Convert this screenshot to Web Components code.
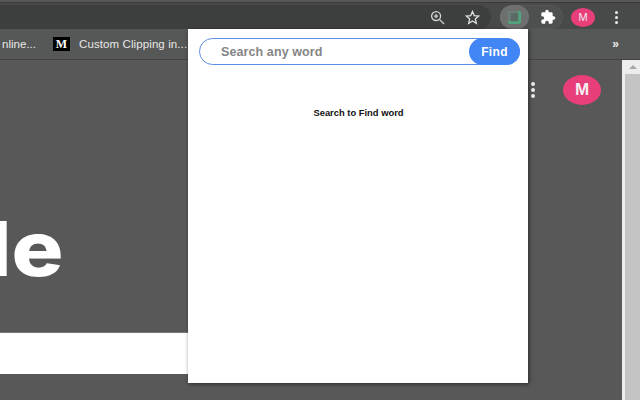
<!DOCTYPE html>
<html>
<head>
<meta charset="utf-8">
<style>
html, body { margin: 0; height: 100%; }
body { width: 640px; height: 400px; overflow: hidden; position: relative; background: #575857; font-family: "Liberation Sans", Arial, sans-serif; display: flex; flex-direction: column; }
</style>
</head>
<body>
<browser-toolbar></browser-toolbar>
<bookmark-bar></bookmark-bar>
<page-view></page-view>
<find-popup></find-popup>

<script>
class BrowserToolbar extends HTMLElement {
    constructor() {
        super();
        this.attachShadow({ mode: 'open' });
        this.shadowRoot.innerHTML = `
            <style>
                :host { display: flex; flex: none; height: 27px; margin-top: 2px; padding-top: 2px; box-sizing: border-box; background: #484949; border-top: 1px solid #3a3a3a; align-items: center; }
                .omni { width: 491px; height: 24px; flex: none; background: #3d3e3e; border-radius: 0 12px 12px 0; display: flex; align-items: center; justify-content: flex-end; gap: 20px; padding-right: 11px; box-sizing: border-box; }
                .ext { margin-left: 9px; width: 63px; height: 24px; border-radius: 12px; background: #4e4f4f; box-shadow: inset 0 0 0 1px #555656; display: flex; align-items: center; }
                .active { width: 29px; height: 24px; border-radius: 12px; background: #6e706f; display: flex; align-items: center; justify-content: center; }
                .puzzle { margin-left: 11px; display: flex; }
                .avatar { margin-left: 8px; width: 24px; height: 19px; border-radius: 50%; background: #e83e7a; color: #f4e8ee; font-size: 11px; display: flex; align-items: center; justify-content: center; }
                .dots { margin-left: 20px; display: flex; flex-direction: column; gap: 2px; }
                .dots i { width: 3px; height: 3px; border-radius: 50%; background: #eee; display: block; }
                svg { display: block; }
            </style>
            <div class="omni">
                <svg width="15" height="15" viewBox="0 0 16 16" fill="none" stroke="#d0d2d2" stroke-width="1.4"><circle cx="6.5" cy="6.5" r="4.8"/><path d="M10 10l5 5M4.3 6.5h4.4M6.5 4.3v4.4"/></svg>
                <svg width="15" height="15" viewBox="0 0 16 16" fill="none" stroke="#dcdede" stroke-width="1.4"><path d="M8 1.6l1.9 4.4 4.7.4-3.6 3.1 1.1 4.7L8 11.7l-4.1 2.5L5 9.5 1.4 6.4l4.7-.4z"/></svg>
            </div>
            <div class="ext">
                <div class="active">
                    <svg width="15" height="15" viewBox="0 0 16 16"><rect x="1" y="1" width="14" height="14" rx="2.5" fill="#4fa67e"/><rect x="1" y="1" width="11" height="11" rx="2" fill="#6b7f78"/><rect x="4" y="3" width="8" height="9" fill="#5a6a64"/></svg>
                </div>
                <div class="puzzle">
                    <svg width="16" height="16" viewBox="0 0 24 24" fill="#fff"><path d="M20.5 11H19V7a2 2 0 0 0-2-2h-4V3.5a2.5 2.5 0 0 0-5 0V5H4a2 2 0 0 0-2 2v3.8h1.5a2.7 2.7 0 0 1 0 5.4H2V20a2 2 0 0 0 2 2h3.8v-1.5a2.7 2.7 0 0 1 5.4 0V22H17a2 2 0 0 0 2-2v-4h1.5a2.5 2.5 0 0 0 0-5z"/></svg>
                </div>
            </div>
            <div class="avatar">M</div>
            <div class="dots"><i></i><i></i><i></i></div>
        `;
    }
}
customElements.define('browser-toolbar', BrowserToolbar);

class BookmarkBar extends HTMLElement {
    constructor() {
        super();
        this.attachShadow({ mode: 'open' });
        this.shadowRoot.innerHTML = `
            <style>
                :host { display: flex; flex: none; height: 31px; box-sizing: border-box; background: #565757; border-bottom: 1px solid #434444; align-items: center; color: #e8e8e6; font-size: 11.5px; overflow: hidden; }
                .cut { width: 36px; flex: none; display: flex; justify-content: flex-end; white-space: nowrap; }
                .m { margin-left: 17px; width: 17px; height: 14px; flex: none; background: #000; color: #fff; font: bold 12px "Liberation Serif", serif; display: flex; align-items: center; justify-content: center; }
                .title { margin-left: 9px; width: 108px; flex: none; white-space: nowrap; letter-spacing: 0.1px; }
                .more { margin-left: auto; margin-right: 21px; font-size: 12px; font-weight: bold; color: #eee; }
            </style>
            <span class="cut">nline...</span>
            <span class="m">M</span>
            <span class="title">Custom Clipping in...</span>
            <span class="more">»</span>
        `;
    }
}
customElements.define('bookmark-bar', BookmarkBar);

class PageView extends HTMLElement {
    constructor() {
        super();
        this.attachShadow({ mode: 'open' });
        this.shadowRoot.innerHTML = `
            <style>
                :host { display: flex; flex: 1; min-height: 0; background: #575857; }
                .main { flex: 1; min-width: 0; overflow: hidden; }
                .head { height: 60px; display: flex; justify-content: flex-end; align-items: center; padding-right: 21px; box-sizing: border-box; }
                .dots { display: flex; flex-direction: column; gap: 2px; margin-right: 28px; }
                .dots i { width: 4px; height: 4px; border-radius: 50%; background: #eee; display: block; }
                .avatar { width: 38px; height: 30px; border-radius: 50%; background: #e83e7a; color: #f6eef2; font: bold 17px "Liberation Sans", sans-serif; display: flex; align-items: center; justify-content: center; }
                .word { height: 212px; overflow: hidden; }
                .word span { display: block; margin: 88px 0 0 -13px; color: #fff; font: 800 76px/80px Inter, "Liberation Sans", sans-serif; white-space: nowrap; transform: scaleX(1.14); transform-origin: 0 0; }
                .band { width: 200px; height: 42px; background: #fff; border-top: 1px solid #777; box-sizing: border-box; }
                .scroll { width: 18px; flex: none; background: #ececec; padding-left: 3px; box-sizing: border-box; display: flex; flex-direction: column; }
                .arrow { height: 14px; flex: none; display: flex; align-items: center; justify-content: center; }
                .arrow i { width: 0; height: 0; border: 4px solid transparent; border-top: 0; border-bottom: 4px solid #a8a8a8; display: block; }
                .thumb { flex: 1; background: #c4c4c4; }
            </style>
            <div class="main">
                <div class="head">
                    <div class="dots"><i></i><i></i><i></i></div>
                    <div class="avatar">M</div>
                </div>
                <div class="word"><span>le</span></div>
                <div class="band"></div>
            </div>
            <div class="scroll"><div class="arrow"><i></i></div><div class="thumb"></div></div>
        `;
    }
}
customElements.define('page-view', PageView);

class FindPopup extends HTMLElement {
    constructor() {
        super();
        this.attachShadow({ mode: 'open' });
        this.shadowRoot.innerHTML = `
            <style>
                :host { display: flex; flex-direction: column; position: absolute; left: 188px; top: 29px; width: 340px; height: 354px; background: #fff; box-shadow: 1px 1px 4px rgba(0,0,0,.55); box-sizing: border-box; padding: 9px 8px 0 11px; }
                .search { display: flex; height: 25px; border: 1px solid #5b8ce6; border-radius: 14px; align-items: stretch; }
                .search span { flex: 1; padding-left: 21px; color: #858585; font-size: 12.5px; font-weight: bold; line-height: 27px; letter-spacing: 0.1px; }
                .search b { width: 51px; margin: -1px -1px -1px 0; background: #4285f4; color: #fff; font-size: 12px; border-radius: 14px; display: flex; align-items: center; justify-content: center; letter-spacing: 0.3px; }
                .msg { margin-top: 42px; text-align: center; font-size: 9.4px; font-weight: bold; color: #111; padding-right: 2px; }
            </style>
            <div class="search"><span>Search any word</span><b>Find</b></div>
            <div class="msg">Search to Find word</div>
        `;
    }
}
customElements.define('find-popup', FindPopup);
</script>
</body>
</html>
